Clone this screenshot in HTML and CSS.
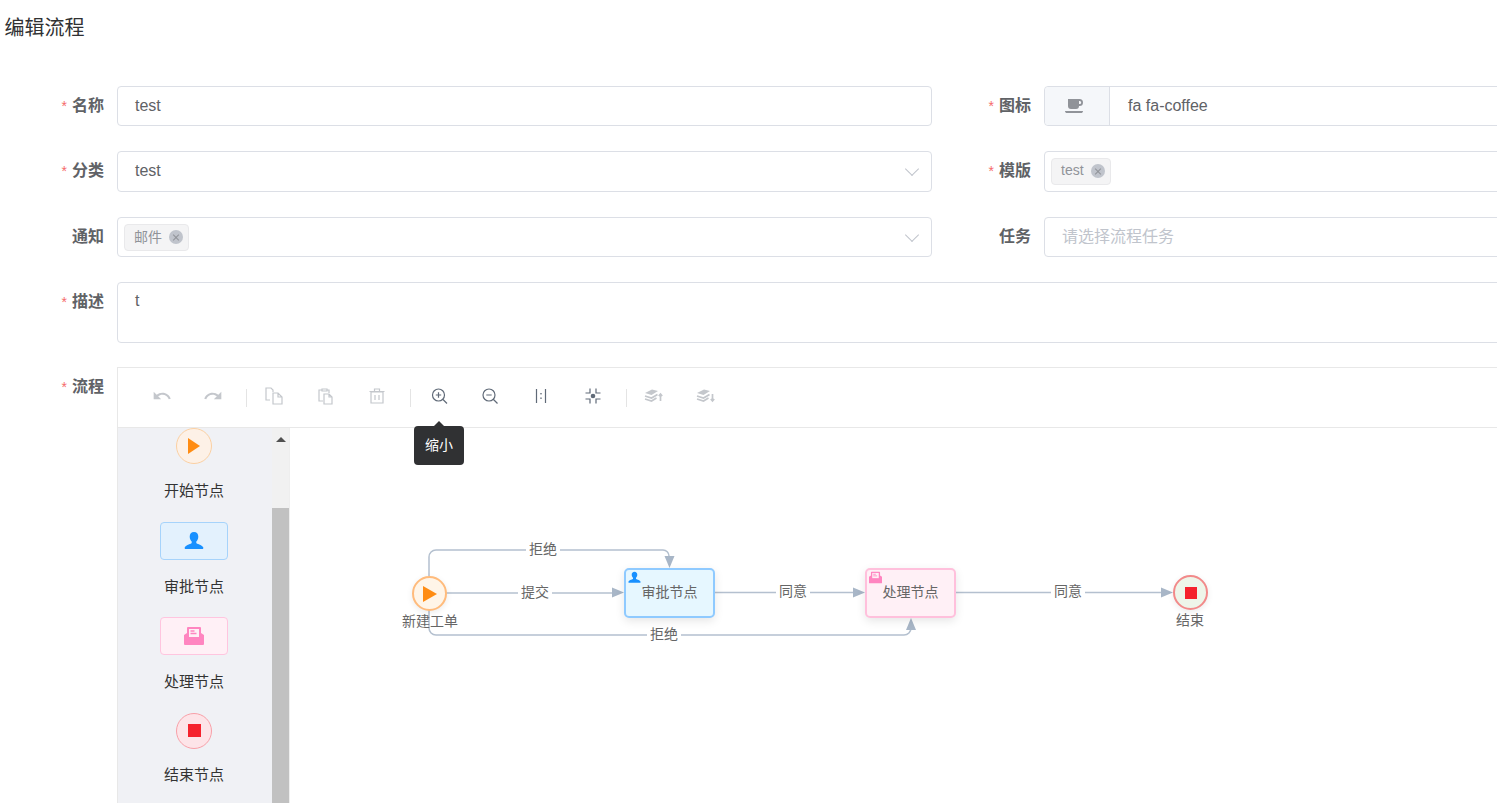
FILE: index.html
```html
<!DOCTYPE html>
<html lang="zh-CN">
<head>
    <meta charset="UTF-8">
    <title>编辑流程</title>
    <link rel="stylesheet" href="styles.css">
</head>
<body>
    <h1 class="title">编辑流程</h1>
    <div class="form">
        <div class="row">
            <div class="field">
                <label class="label"><i>*</i>名称</label>
                <div class="input">test</div>
            </div>
            <div class="field second">
                <label class="label"><i>*</i>图标</label>
                <div class="input group">
                    <span class="prepend">
                        <svg class="coffee" width="20" height="15" viewBox="0 0 20 15"><path fill="#909399" d="M3 0h11.500a3.200 3.200 0 0 1 0 7H14a3 3 0 0 1-3 3H6a3 3 0 0 1-3-3zM14 2v3h.7a1.500 1.500 0 0 0 0-3zM0 12h18c0 1.500-1 2-2 2H2c-1 0-2-.5-2-2z"/></svg>
                    </span>
                    <span class="group-text">fa fa-coffee</span>
                </div>
            </div>
        </div>
        <div class="row tall">
            <div class="field">
                <label class="label"><i>*</i>分类</label>
                <div class="input">test<span class="chevron"></span></div>
            </div>
            <div class="field second">
                <label class="label"><i>*</i>模版</label>
                <div class="input tags">
                    <span class="tag">test<span class="tag-close"></span></span>
                </div>
            </div>
        </div>
        <div class="row">
            <div class="field">
                <label class="label">通知</label>
                <div class="input tags">
                    <span class="tag">邮件<span class="tag-close"></span></span>
                    <span class="chevron"></span>
                </div>
            </div>
            <div class="field second">
                <label class="label">任务</label>
                <div class="input placeholder">请选择流程任务</div>
            </div>
        </div>
        <div class="row area">
            <div class="field wide">
                <label class="label"><i>*</i>描述</label>
                <div class="input textarea">t</div>
            </div>
        </div>
        <div class="row flow-row">
            <div class="field wide">
                <label class="label"><i>*</i>流程</label>
                <div class="editor">
                    <div class="toolbar">
                        <span class="tool"><svg width="20" height="20" viewBox="0 0 24 24"><path class="fill-off" d="M12.500 8c-2.650 0-5.050.99-6.900 2.600L2 7v9h9l-3.620-3.620c1.390-1.160 3.160-1.880 5.120-1.880 3.540 0 6.550 2.310 7.600 5.500l2.370-.78C21.080 11.030 17.150 8 12.500 8z"/></svg></span>
                        <span class="tool"><svg width="20" height="20" viewBox="0 0 24 24"><path class="fill-off" d="M18.400 10.600C16.550 8.990 14.150 8 11.500 8c-4.650 0-8.580 3.030-9.970 7.220l2.370.78C4.950 12.810 7.950 10.500 11.500 10.500c1.950 0 3.730.72 5.120 1.880L13 16h9V7z"/></svg></span>
                        <span class="sep"></span>
                        <span class="tool"><svg width="20" height="20" viewBox="0 0 20 20"><path class="line-off" d="M6 14H2V2h5l2 2v2M9 7h5l4 4v7H9zM14 7v4h4"/></svg></span>
                        <span class="tool"><svg width="20" height="20" viewBox="0 0 20 20"><path class="line-off" d="M7 15H3V4h3M11 4h2v3M6 3h5v2H6zM8 8h5l3 3v7H8zM13 8v3h3"/></svg></span>
                        <span class="tool"><svg width="20" height="20" viewBox="0 0 20 20"><path class="line-off" d="M4 6h12v11H4zM2.500 5.500h15M7.500 5V3h5v2M8 9v5M12 9v5"/></svg></span>
                        <span class="sep"></span>
                        <span class="tool"><svg width="20" height="20" viewBox="0 0 20 20"><path class="line-on" d="M9.500 3a6 6 0 1 0 0 12 6 6 0 0 0 0-12zM14 13.500l4 4M6.800 9h5.400M9.500 6.300v5.400"/></svg></span>
                        <span class="tool"><svg width="20" height="20" viewBox="0 0 20 20"><path class="line-on" d="M9 3a6 6 0 1 0 0 12A6 6 0 0 0 9 3zM13.500 13.500l4 4M6.300 9h5.400"/></svg></span>
                        <span class="tool"><svg width="20" height="20" viewBox="0 0 20 20"><path class="line-on" d="M5.500 3v14M14.500 3v14"/><rect x="9.300" y="7" width="1.400" height="1.400" fill="#606a78"/><rect x="9.300" y="11.500" width="1.400" height="1.400" fill="#606a78"/></svg></span>
                        <span class="tool"><svg width="20" height="20" viewBox="0 0 20 20"><path class="line-on" d="M7 2.500V7H2.500M13 2.500V7h4.500M7 17.500V13H2.500M13 17.500V13h4.500"/><circle cx="10" cy="10" r="2.300" fill="#606a78"/></svg></span>
                        <span class="sep"></span>
                        <span class="tool"><svg width="20" height="20" viewBox="0 0 20 20"><path class="fill-off" d="M1 7l7-3.500L14 5 7.500 9z"/><path class="line-heavy" d="M1 10l6.500 2 6-3.500M1 13l6.500 2 5-3M16.500 15V8M14.800 10l1.700-2 1.700 2"/></svg></span>
                        <span class="tool"><svg width="20" height="20" viewBox="0 0 20 20"><path class="fill-off" d="M1 7l7-3.500L14 5 7.500 9z"/><path class="line-heavy" d="M1 10l6.500 2 6-3.500M1 13l6.500 2 5-3M16.500 8v7M14.800 13l1.700 2 1.700-2"/></svg></span>
                    </div>
                    <div class="tooltip">缩小</div>
                    <div class="workspace">
                        <div class="sidebar">
                            <div class="palette">
                                <span class="shape circle start"><svg width="14" height="16" viewBox="0 0 14 16"><path fill="#ff8c13" d="M1 0l12 8-12 8z"/></svg></span>
                                <span class="shape-name">开始节点</span>
                                <span class="shape box approve">
                                    <svg width="20" height="20" viewBox="0 0 20 20"><path fill="#1890ff" d="M10 1c2.800 0 4.300 2.100 4.300 4.700 0 2-1 3.800-2 4.800v1.500c0 .8 5.700 1.600 7 4.500.3.800-.2 1.500-1 1.500H1.700c-.8 0-1.300-.7-1-1.500 1.300-2.900 7-3.700 7-4.500v-1.500c-1-1-2-2.800-2-4.800C5.700 3.100 7.200 1 10 1z"/></svg>
                                </span>
                                <span class="shape-name">审批节点</span>
                                <span class="shape box handle">
                                    <svg width="20" height="20" viewBox="0 0 20 20"><path fill="#ff85c0" d="M4 1h12a1 1 0 0 1 1 1v5l3 2v9a1 1 0 0 1-1 1H1a1 1 0 0 1-1-1V9l3-2V2a1 1 0 0 1 1-1z"/><path fill="#fff0f6" d="M5 3h10v8H5z"/><path stroke="#ff85c0" stroke-width="1.300" d="M6.500 5h4M6.500 7.500h6"/></svg>
                                </span>
                                <span class="shape-name">处理节点</span>
                                <span class="shape circle stop"><span class="square big"></span></span>
                                <span class="shape-name">结束节点</span>
                            </div>
                        </div>
                        <div class="scrollbar">
                            <span class="scroll-up"></span>
                            <span class="scroll-thumb"></span>
                        </div>
                        <div class="canvas">
                            <svg class="edges" width="1207" height="375" viewBox="290 428 1207 375">
                                <g class="edge">
                                    <path d="M429 576V557a7 7 0 0 1 7-7H663a6 6 0 0 1 6 6V560"/>
                                    <path d="M446 593H615"/>
                                    <path d="M429 610V628a7 7 0 0 0 7 7H904a7 7 0 0 0 7-7V626"/>
                                    <path d="M715 592.500H856"/>
                                    <path d="M956 592.500H1163"/>
                                </g>
                                <g class="arrow">
                                    <path d="M664.500 556h10L669.500 568z"/>
                                    <path d="M612 587.500v10L624 592.500z"/>
                                    <path d="M906 630h10L911 618z"/>
                                    <path d="M853 587.500v10L865 592.500z"/>
                                    <path d="M1161 587.500v10L1173 592.500z"/>
                                </g>
                            </svg>
                            <span class="edge-label l1">拒绝</span>
                            <span class="edge-label l2">提交</span>
                            <span class="edge-label l3">拒绝</span>
                            <span class="edge-label l4">同意</span>
                            <span class="edge-label l5">同意</span>

                            <div class="node-round n-start"><svg width="14" height="16" viewBox="0 0 14 16"><path fill="#ff8c13" d="M0 0l14 8-14 8z"/></svg></div>
                            <span class="node-name name-start">新建工单</span>
                            <div class="node-task n-approve">
                                <svg class="task-icon" width="13" height="13" viewBox="0 0 20 20"><path fill="#1890ff" d="M10 1c2.800 0 4.300 2.100 4.300 4.700 0 2-1 3.800-2 4.800v1.500c0 .8 5.700 1.600 7 4.500.3.800-.2 1.500-1 1.500H1.700c-.8 0-1.300-.7-1-1.500 1.300-2.900 7-3.700 7-4.500v-1.500c-1-1-2-2.800-2-4.800C5.700 3.100 7.200 1 10 1z"/></svg>
                                审批节点
                            </div>
                            <div class="node-task n-handle">
                                <svg class="task-icon" width="13" height="13" viewBox="0 0 20 20"><path fill="#ff85c0" d="M4 1h12a1 1 0 0 1 1 1v5l3 2v9a1 1 0 0 1-1 1H1a1 1 0 0 1-1-1V9l3-2V2a1 1 0 0 1 1-1z"/><path fill="#fff0f6" d="M5 3h10v8H5z"/><path stroke="#ff85c0" stroke-width="1.300" d="M6.500 5h4M6.500 7.500h6"/></svg>
                                处理节点
                            </div>
                            <div class="node-round n-end"><span class="square"></span></div>
                            <span class="node-name name-end">结束</span>
                        </div>
                    </div>
                </div>
            </div>
        </div>
    </div>
</body>
</html>
```

FILE: styles.css
```css
*{
    margin: 0;
    padding: 0;
    box-sizing: border-box;
}
html,body{
    height: 803px;
    overflow: hidden;
}
body{
    background-color: #fff;
    font-family: "Liberation Sans", "Noto Sans CJK SC", sans-serif;
    color: #606266;
}
.title{
    font-size: 20px;
    font-weight: 400;
    line-height: 28px;
    height: 86px;
    padding: 14px 0 0 4.500px;
    color: #303133;
}
.form{
    width: 1859px;
}
.row{
    display: flex;
    height: 40px;
    margin-bottom: 25px;
}
.row.tall{
    height: 41px;
}
.row.tall .input{
    padding-bottom: 1px;
}
.row.area{
    height: 61px;
    margin-bottom: 24px;
}
.row.flow-row{
    height: 440px;
    margin-bottom: 0;
}
.field{
    display: flex;
    width: 932px;
}
.field.second{
    width: 927px;
}
.field.wide{
    width: 100%;
}
.label{
    width: 117px;
    flex: none;
    padding-right: 13px;
    text-align: right;
    font-size: 16px;
    font-weight: 700;
    line-height: 40px;
    color: #606266;
}
.field.second .label{
    width: 112px;
}
.label i{
    color: #f56c6c;
    font-style: normal;
    font-weight: 400;
    font-size: 14px;
    margin-right: 5px;
}
.input{
    position: relative;
    flex: 1;
    display: flex;
    align-items: center;
    border: 1px solid #dcdfe6;
    border-radius: 4px;
    padding: 0 17px;
    font-size: 16px;
    color: #606266;
}
.input.group{
    padding: 0;
}
.prepend{
    width: 65px;
    height: 100%;
    display: flex;
    align-items: center;
    justify-content: center;
    background-color: #f5f7fa;
    border-right: 1px solid #dcdfe6;
    border-radius: 4px 0 0 4px;
}
.coffee{
    margin-left: -4px;
}
.group-text{
    padding-left: 18px;
}
.input.tags{
    padding: 0 6px;
}
.input.placeholder{
    color: #c0c4cc;
    padding-bottom: 4px;
}
.input.textarea{
    align-items: flex-start;
    padding-top: 7px;
    line-height: 22px;
}
.tag{
    display: inline-flex;
    align-items: center;
    height: 27px;
    padding: 0 5px 3px 9px;
    background-color: #f4f4f5;
    border: 1px solid #e9e9eb;
    border-radius: 4px;
    font-size: 14px;
    color: #909399;
}
.tag-close{
    position: relative;
    width: 14px;
    height: 14px;
    margin: 3px 0 0 7px;
    border-radius: 50%;
    background-color: #c0c4cc;
}
.tag-close::before,
.tag-close::after{
    content: "";
    position: absolute;
    left: 3px;
    top: 6.500px;
    width: 8px;
    height: 1px;
    background-color: #909399;
    transform: rotate(45deg);
}
.tag-close::after{
    transform: rotate(-45deg);
}
.chevron{
    position: absolute;
    right: 14px;
    top: 12px;
    width: 10px;
    height: 10px;
    border-right: 1px solid #c0c4cc;
    border-bottom: 1px solid #c0c4cc;
    transform: rotate(45deg);
}
.editor{
    position: relative;
    flex: 1;
    border-top: 1px solid #e8e8e8;
    border-left: 1px solid #e8e8e8;
}
.toolbar{
    display: flex;
    align-items: center;
    height: 60px;
    padding: 0 0 4px 18px;
    border-bottom: 1px solid #e8e8e8;
}
.tool{
    width: 51.400px;
    display: flex;
    justify-content: center;
}
.sep{
    width: 1px;
    height: 18px;
    margin: 4px 2px 0 7px;
    background-color: #e4e4e4;
}
.fill-off{
    fill: #c4c7cc;
}
.line-off{
    fill: none;
    stroke: #c4c7cc;
    stroke-width: 1.200;
}
.line-heavy{
    fill: none;
    stroke: #c4c7cc;
    stroke-width: 1.700;
}
.line-on{
    fill: none;
    stroke: #606a78;
    stroke-width: 1.200;
}
.tooltip{
    position: absolute;
    left: 296px;
    top: 58px;
    width: 50px;
    height: 39px;
    line-height: 39px;
    text-align: center;
    font-size: 14px;
    color: #fff;
    background-color: #303133;
    border-radius: 4px;
    z-index: 2;
}
.tooltip::before{
    content: "";
    position: absolute;
    left: 19px;
    top: -5px;
    border-left: 6px solid transparent;
    border-right: 6px solid transparent;
    border-bottom: 6px solid #303133;
}
.workspace{
    display: flex;
    height: 376px;
}
.sidebar{
    width: 154px;
    height: 100%;
    padding-right: 2px;
    background-color: #f0f1f5;
    overflow: hidden;
}
.palette{
    display: flex;
    flex-direction: column;
    align-items: center;
    font-size: 15px;
    color: #333;
}
.shape{
    display: flex;
    align-items: center;
    justify-content: center;
    flex: none;
}
.circle{
    width: 36px;
    height: 36px;
    border-radius: 50%;
}
.box{
    width: 68px;
    height: 38px;
    border-radius: 4px;
}
.shape.start{
    background-color: #fdf1e7;
    border: 1px solid #fbd0a3;
}
.shape.approve{
    background-color: #e3f1fd;
    border: 1px solid #a6d3fb;
}
.shape.handle{
    background-color: #fff0f6;
    border: 1px solid #ffc5df;
}
.shape.stop{
    background-color: #fde4e8;
    border: 1px solid #f8a0a8;
    margin-bottom: -1px;
}
.shape-name{
    height: 20px;
    line-height: 20px;
    margin: 17px 0 20.500px;
}
.square{
    display: block;
    width: 12px;
    height: 12px;
    background-color: #f5222d;
}
.square.big{
    width: 13px;
    height: 13px;
}
.scrollbar{
    position: relative;
    display: flex;
    flex-direction: column;
    width: 17px;
    height: 100%;
    background-color: #f1f1f1;
}
.scroll-up{
    position: absolute;
    left: 4px;
    top: 9px;
    border-left: 5px solid transparent;
    border-right: 5px solid transparent;
    border-bottom: 5px solid #505050;
}
.scroll-thumb{
    margin-top: 80px;
    flex: 1;
    background-color: #c1c1c1;
}
.canvas{
    position: relative;
    flex: 1;
    height: 100%;
    font-size: 14px;
    color: #666;
    border-left: 1px solid #eee;
    overflow: hidden;
}
.edges{
    position: absolute;
    left: 0;
    top: 0;
}
.edge path{
    fill: none;
    stroke: #b4c0cf;
    stroke-width: 1.500;
}
.arrow path{
    fill: #a8b6c7;
}
.edge-label{
    position: absolute;
    height: 16px;
    line-height: 16px;
    padding: 0 3px;
    background-color: #fff;
}
.l1{ left: 236px; top: 113px; }
.l2{ left: 228px; top: 156px; }
.l3{ left: 357px; top: 198px; }
.l4{ left: 486px; top: 155px; }
.l5{ left: 761px; top: 155px; }
.node-round{
    position: absolute;
    width: 35px;
    height: 35px;
    display: flex;
    align-items: center;
    justify-content: center;
    border-radius: 50%;
    box-shadow: 0 2px 6px rgba(0,0,0,0.08);
}
.n-start{
    left: 122px;
    top: 148px;
    background-color: #fff5e8;
    border: 2px solid #ffbb7c;
}
.n-end{
    left: 883px;
    top: 147px;
    background-color: #eef5e9;
    border: 2px solid #f28a8a;
}
.node-name{
    position: absolute;
    line-height: 16px;
    white-space: nowrap;
}
.name-start{ left: 112px; top: 185px; }
.name-end{ left: 886px; top: 184px; }
.node-task{
    position: absolute;
    top: 140px;
    width: 91px;
    height: 50px;
    line-height: 44px;
    text-align: center;
    border-radius: 5px;
    box-shadow: 0 3px 10px rgba(0,0,0,0.1);
}
.n-approve{
    left: 334px;
    background-color: #e6f7ff;
    border: 2px solid #8fcaff;
}
.n-handle{
    left: 575px;
    background-color: #fff0f6;
    border: 2px solid #ffc0dc;
}
.task-icon{
    position: absolute;
    left: 2px;
    top: 1px;
}
```
